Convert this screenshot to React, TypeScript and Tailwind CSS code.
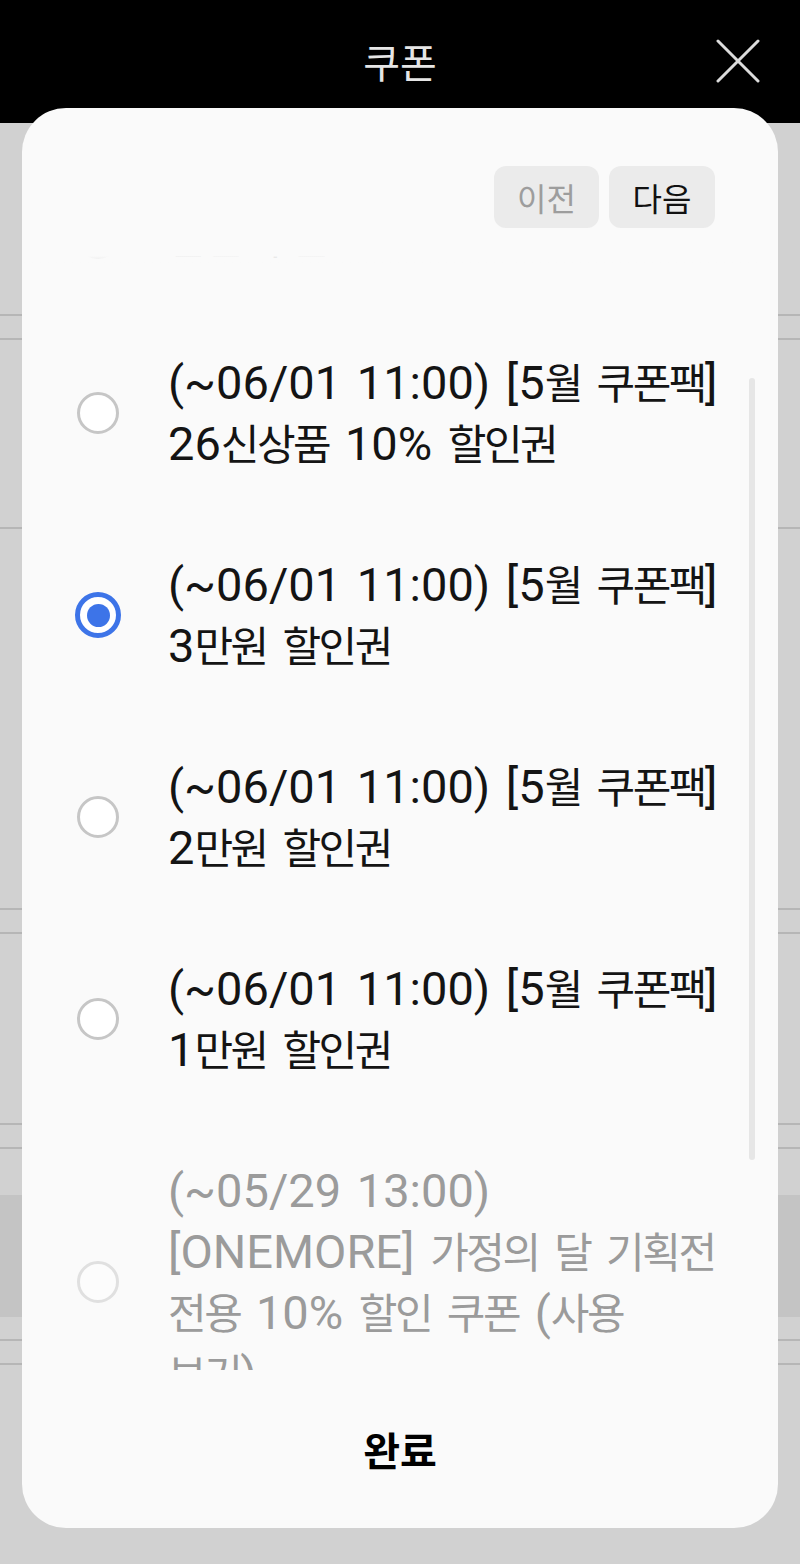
import React from "react";

const FONT = 'Roboto, "Noto Sans CJK KR", sans-serif';
const KFONT = '"Noto Sans CJK KR", Roboto, sans-serif';

function Mixed({ s }: { s: string }) {
  const parts = s.split(/([\uAC00-\uD7A3]+)/);
  return (
    <>
      {parts.map((p, i) =>
        i % 2 === 1 ? (
          <span
            key={i}
            className="text-[42px] leading-none tracking-[-2.5px]"
            style={{ fontFamily: KFONT }}
          >
            {p}
          </span>
        ) : (
          <span key={i}>{p}</span>
        )
      )}
    </>
  );
}

function Radio({ state }: { state: "off" | "on" | "disabled" }) {
  return (
    <div className="w-[46px] h-[46px] flex items-center justify-center shrink-0">
      {state === "on" ? (
        <div className="w-[46px] h-[46px] rounded-full border-[5px] border-[#3d74e8] flex items-center justify-center bg-white">
          <div className="w-[23px] h-[23px] rounded-full bg-[#3d74e8]" />
        </div>
      ) : state === "off" ? (
        <div className="w-[42px] h-[42px] rounded-full border-[3px] border-[#c6c6c6] bg-white" />
      ) : (
        <div className="w-[42px] h-[42px] rounded-full border-[3px] border-[#e0e0e0] bg-[#fcfcfc]" />
      )}
    </div>
  );
}

const items: { lines: string[]; state: "off" | "on" | "disabled" }[] = [
  { lines: ["할인 쿠폰"], state: "off" },
  { lines: ["(~06/01 11:00) [5월 쿠폰팩]", "26신상품 10% 할인권"], state: "off" },
  { lines: ["(~06/01 11:00) [5월 쿠폰팩]", "3만원 할인권"], state: "on" },
  { lines: ["(~06/01 11:00) [5월 쿠폰팩]", "2만원 할인권"], state: "off" },
  { lines: ["(~06/01 11:00) [5월 쿠폰팩]", "1만원 할인권"], state: "off" },
  {
    lines: [
      "(~05/29 13:00)",
      "[ONEMORE] 가정의 달 기획전",
      "전용 10% 할인 쿠폰 (사용",
      "보기)",
    ],
    state: "disabled",
  },
];

function Line() {
  return <div className="h-[2px] bg-[#b6b6b6]" />;
}

export default function App() {
  return (
    <div
      className="relative w-[800px] h-[1564px] overflow-hidden bg-[#d1d1d1]"
      style={{ fontFamily: FONT }}
    >
      {/* header */}
      <div className="h-[123px] bg-black grid grid-cols-[1fr_auto_1fr] items-center">
        <div />
        <div
          className="text-[40px] text-[#e6e6e6] leading-none -mt-[2px]"
          style={{ fontFamily: KFONT }}
        >
          쿠폰
        </div>
        <div className="flex justify-end pr-[40px]">
          <svg width="44" height="44" viewBox="0 0 44 44" className="-mt-[2px]">
            <path
              d="M2 2 L42 42 M42 2 L2 42"
              stroke="#dcdcdc"
              strokeWidth="3"
              strokeLinecap="round"
              fill="none"
            />
          </svg>
        </div>
      </div>

      {/* background page */}
      <div className="h-[191px]" />
      <Line />
      <div className="h-[22px]" />
      <Line />
      <div className="h-[187px]" />
      <Line />
      <div className="h-[379px]" />
      <Line />
      <div className="h-[22px]" />
      <Line />
      <div className="h-[189px]" />
      <Line />
      <div className="h-[22px]" />
      <Line />
      <div className="h-[46px]" />
      <div className="h-[122px] bg-[#c4c4c4]" />
      <div className="h-[22px]" />
      <Line />
      <div className="h-[22px]" />
      <Line />

      {/* modal */}
      <div className="absolute top-[108px] left-[22px] w-[756px] h-[1420px] rounded-[44px] bg-[#fafafa] flex flex-col overflow-hidden">
        <div className="flex justify-end gap-[10px] pt-[58px] pr-[63px]">
          <button
            className="w-[105px] h-[62px] rounded-[12px] bg-[#ebebeb] text-[32px] text-[#9d9d9d] flex items-center justify-center"
            style={{ fontFamily: KFONT }}
          >
            이전
          </button>
          <button
            className="w-[106px] h-[62px] rounded-[12px] bg-[#ebebeb] text-[32px] text-[#111] flex items-center justify-center"
            style={{ fontFamily: KFONT }}
          >
            다음
          </button>
        </div>

        <div className="relative mt-[28px] h-[1114px] overflow-hidden">
          <div className="-mt-[89px]">
            {items.map((it, i) => (
              <div
                key={i}
                className={
                  "flex items-center pl-[53px] pt-[40px] " +
                  (i === 0 ? "pb-[44px]" : "pb-[40px]")
                }
              >
                <Radio state={it.state} />
                <div
                  className={
                    "ml-[47px] text-[47px] leading-[61px] [word-spacing:4px] " +
                    (it.state === "disabled" ? "text-[#9b9b9b]" : "text-[#141414]")
                  }
                >
                  {it.lines.map((l, j) => (
                    <div key={j} className="whitespace-nowrap h-[61px]">
                      <Mixed s={l} />
                    </div>
                  ))}
                </div>
              </div>
            ))}
          </div>
          <div className="absolute left-0 right-0 top-0 h-[8px] bg-gradient-to-b from-[#fafafa] to-[#fafafa]/50" />
        </div>

        <div
          className="flex-1 flex items-center justify-center text-[40px] font-bold text-black"
          style={{ fontFamily: KFONT }}
        >
          완료
        </div>

        <div className="absolute left-[727px] top-[270px] w-[6px] h-[782px] rounded-full bg-[#e6e6e6]" />
      </div>
    </div>
  );
}
